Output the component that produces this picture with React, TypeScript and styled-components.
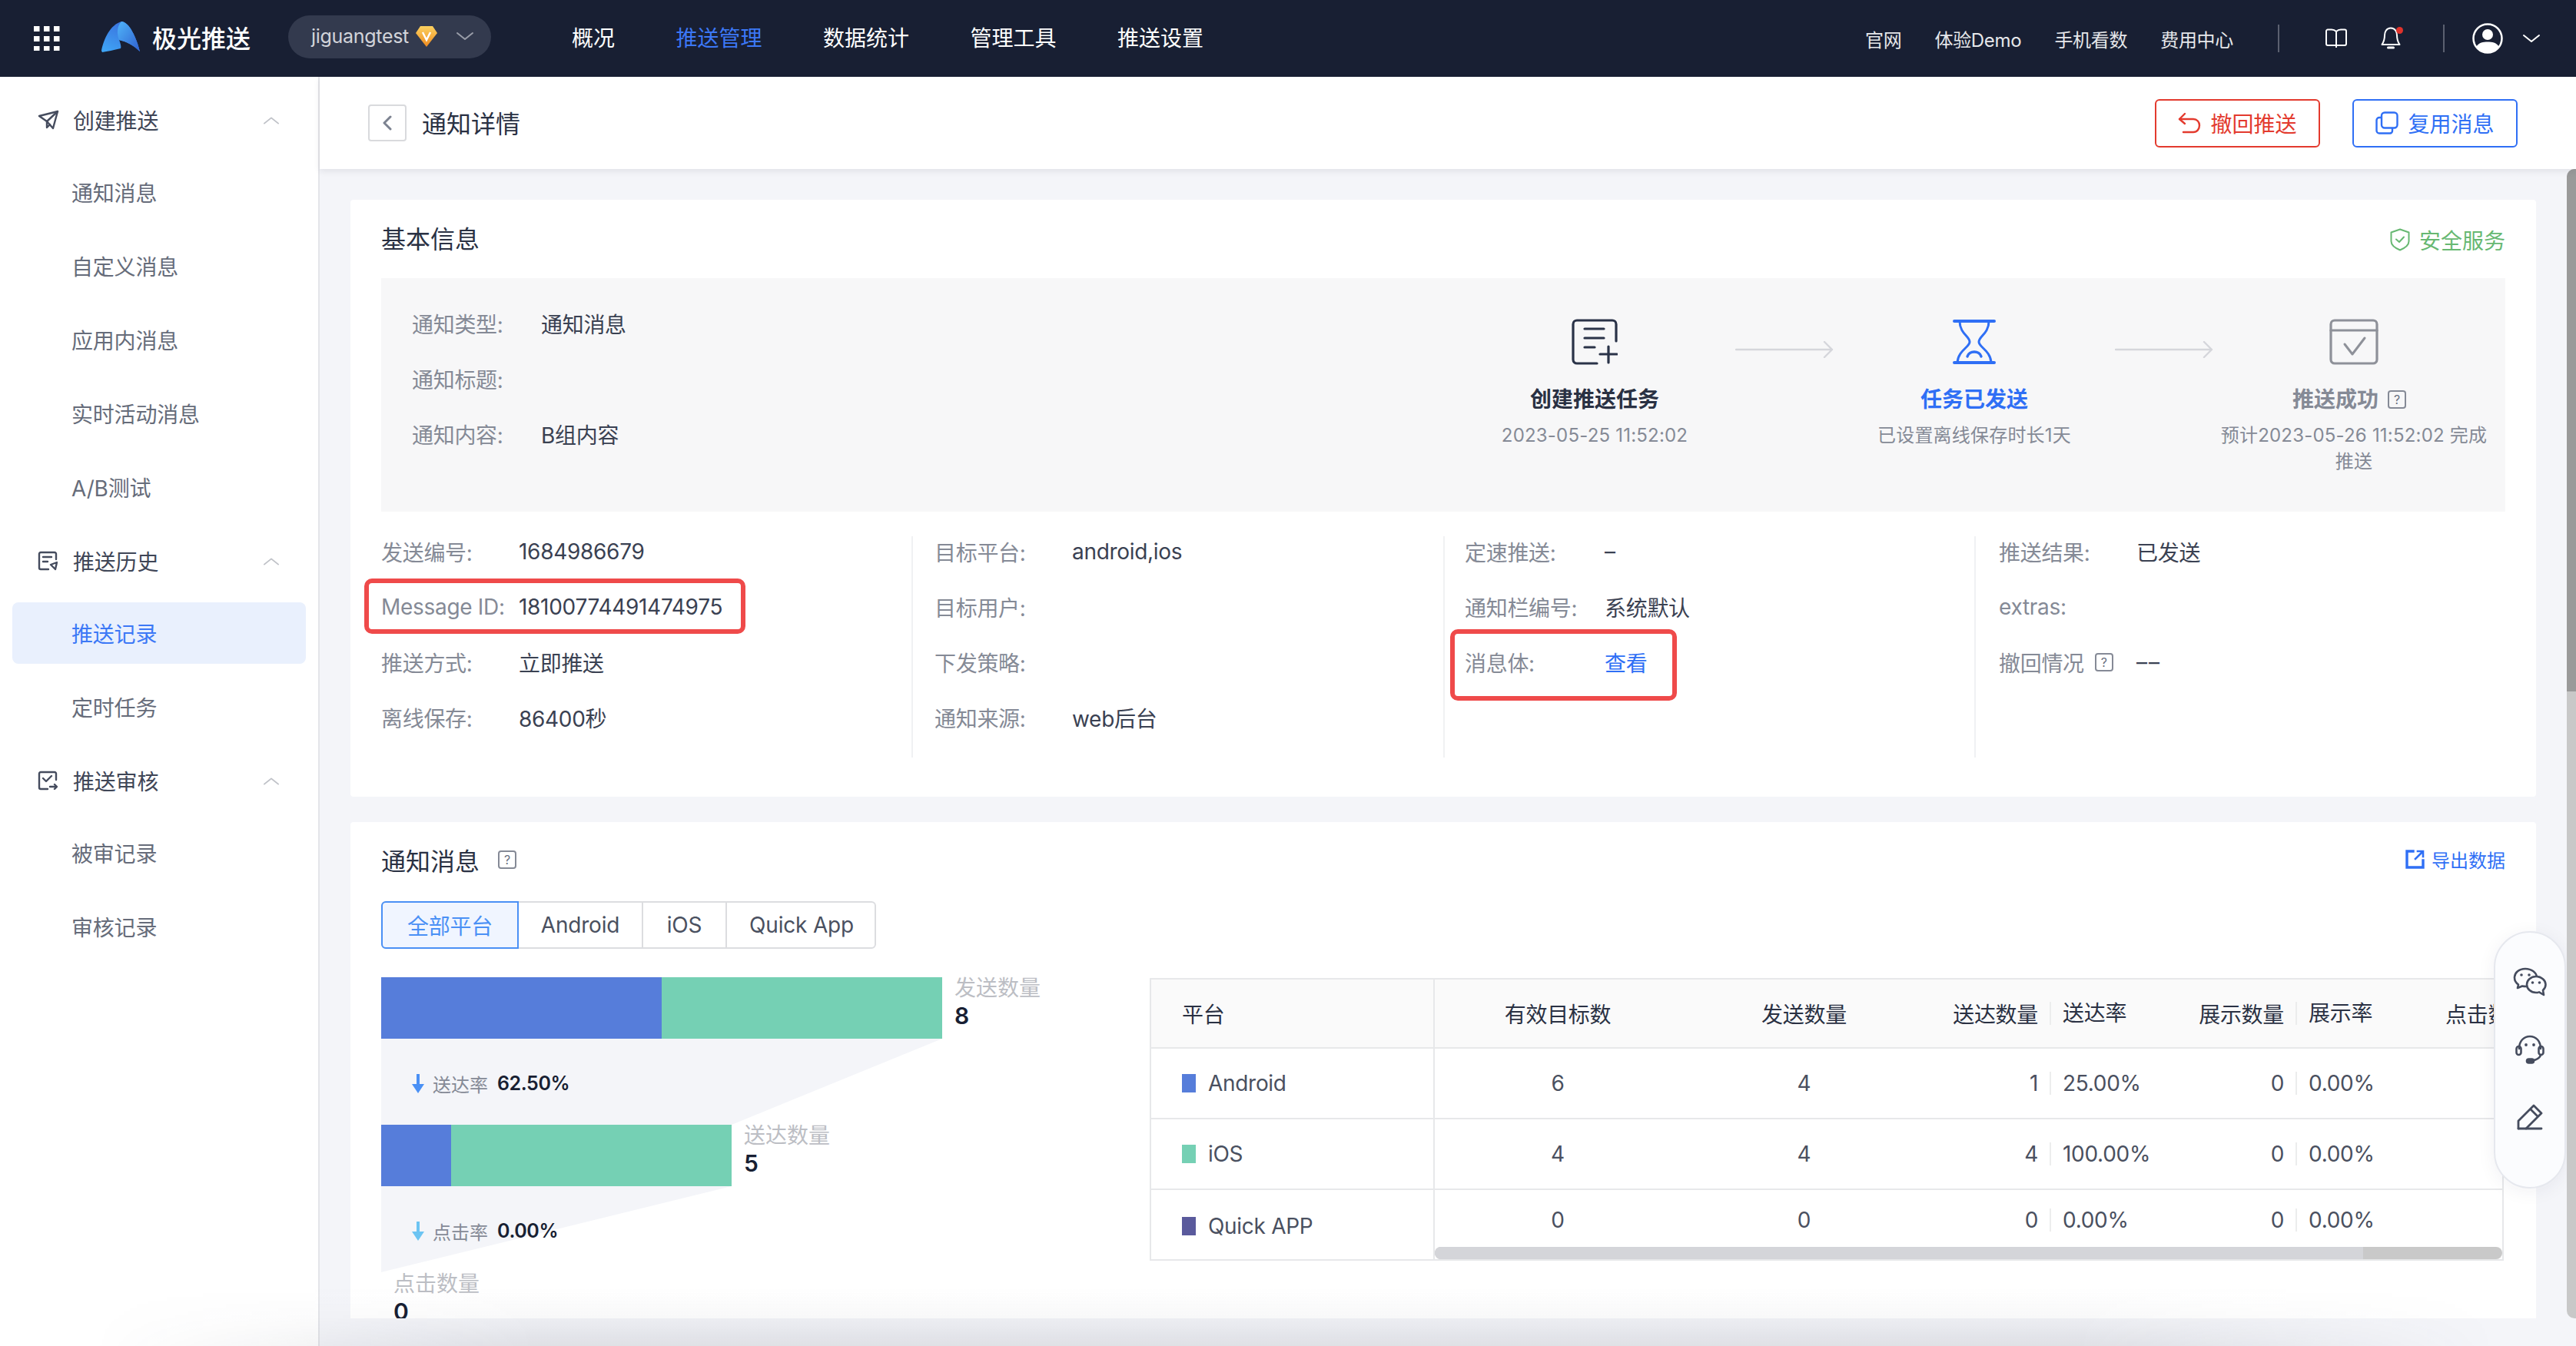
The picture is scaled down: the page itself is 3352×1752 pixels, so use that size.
import React from "react";
import styled, { createGlobalStyle } from "styled-components";

const Global = createGlobalStyle`
  html, body { margin: 0; padding: 0; width: 3352px; height: 1752px; overflow: hidden; background: #f4f5f9; }
  * { box-sizing: border-box; }
  body { font-family: Inter, "Noto Sans CJK SC", sans-serif; font-size: 28px; }
`;

const Page = styled.div`
  position: relative;
  width: 3352px;
  height: 1752px;
  overflow: hidden;
  display: flex;
  flex-direction: column;
  background: #f4f5f9;
`;

/* ---------- top bar ---------- */
const TopBar = styled.header`
  flex: none;
  height: 100px;
  background: #181f33;
  display: flex;
  align-items: center;
  padding: 0 47px 0 44px;
  color: #fff;
`;
const Brand = styled.div`
  display: flex;
  align-items: center;
  margin-left: 54px;
  gap: 16px;
  font-size: 32px;
  font-weight: 500;
  margin-top: -4px;
`;
const Tenant = styled.div`
  width: 264px;
  height: 56px;
  margin: -4px 0 0 49px;
  border-radius: 28px;
  background: #333a4e;
  display: flex;
  align-items: center;
  padding: 0 0 2px 30px;
  color: #d2d4da;
  font-size: 25px;
  letter-spacing: -0.3px;
  gap: 8px;
`;
const TenantChevron = styled.span`
  margin-left: 16px;
  display: flex;
`;
const Nav = styled.nav`
  display: flex;
  gap: 79.5px;
  margin-left: 105px;
`;
const NavItem = styled.a<{ $active?: boolean }>`
  font-size: 28px;
  line-height: 40px;
  color: ${(p) => (p.$active ? "#3c78f6" : "#fff")};
`;
const TopRight = styled.div`
  margin-left: auto;
  display: flex;
  align-items: center;
`;
const TopLinks = styled.div`
  display: flex;
  gap: 43px;
  font-size: 24px;
  letter-spacing: -0.3px;
  color: #e6e7ea;
`;
const TopDivider = styled.span<{ $ml: number; $mr: number }>`
  width: 2px;
  height: 36px;
  margin: 0 ${(p) => p.$mr}px 0 ${(p) => p.$ml}px;
  background: #5b6070;
`;
const BellWrap = styled.span`
  position: relative;
  display: flex;
  margin-left: 44px;
`;
const RedDot = styled.span`
  position: absolute;
  top: 0;
  right: -3px;
  width: 9px;
  height: 9px;
  border-radius: 50%;
  background: #e0322b;
`;

/* ---------- body ---------- */
const Body = styled.div`
  flex: 1;
  display: flex;
  min-height: 0;
`;
const Sidebar = styled.aside`
  flex: none;
  width: 416px;
  background: #fff;
  border-right: 2px solid #e4e5e9;
  padding: 16px 16px 0;
`;
const GroupHead = styled.div`
  height: 80px;
  margin-bottom: 14px;
  display: flex;
  align-items: center;
  padding-left: 33px;
  color: #3f4657;
  font-size: 28px;
  letter-spacing: -0.2px;
`;
const GroupIcon = styled.span`
  width: 46px;
  display: flex;
  align-items: center;
`;
const GroupChevron = styled.span`
  margin-left: auto;
  margin-right: 35px;
  margin-top: 2px;
  display: flex;
`;
const SideItem = styled.div<{ $active?: boolean }>`
  height: 80px;
  margin-bottom: 16px;
  padding-left: 77px;
  display: flex;
  align-items: center;
  border-radius: 8px;
  font-size: 28px;
  letter-spacing: -0.2px;
  color: ${(p) => (p.$active ? "#3c78f6" : "#666c7a")};
  background: ${(p) => (p.$active ? "#e9f0fd" : "transparent")};
`;

const Main = styled.main`
  flex: 1;
  min-width: 0;
  display: flex;
  flex-direction: column;
`;
const PageHeader = styled.div`
  position: relative;
  z-index: 2;
  flex: none;
  height: 120px;
  background: #fff;
  box-shadow: 0 3px 8px rgba(30, 35, 60, 0.09);
  display: flex;
  align-items: center;
  padding: 0 76px 0 63px;
`;
const BackButton = styled.span`
  width: 50px;
  height: 48px;
  border: 2px solid #d9dadd;
  border-radius: 4px;
  display: flex;
  align-items: center;
  justify-content: center;
`;
const PageTitle = styled.h1`
  margin: -3px 0 0 20px;
  font-size: 32px;
  font-weight: 400;
  color: #2a3143;
`;
const Actions = styled.div`
  margin-left: auto;
  display: flex;
  gap: 42px;
`;
const ActionButton = styled.button<{ $color: string }>`
  width: 215px;
  height: 63px;
  background: #fff;
  border: 2.5px solid ${(p) => p.$color};
  border-radius: 6px;
  color: ${(p) => p.$color};
  font: inherit;
  font-size: 28px;
  display: flex;
  align-items: center;
  justify-content: center;
  gap: 12px;
  padding: 0;
`;

const Content = styled.div`
  flex: none;
  height: 1496px;
  overflow: hidden;
  padding: 40px 52px 0 40px;
`;
const Card = styled.section<{ $h: number; $mt?: number }>`
  height: ${(p) => p.$h}px;
  margin-top: ${(p) => p.$mt ?? 0}px;
  background: #fff;
  border-radius: 4px;
  padding: 30px 40px 0;
`;
const CardHead = styled.div`
  height: 40px;
  display: flex;
  align-items: center;
  justify-content: space-between;
`;
const CardTitle = styled.h2`
  margin: -2px 0 0;
  font-size: 32px;
  font-weight: 400;
  color: #2a3143;
  display: flex;
  align-items: center;
  gap: 24px;
`;
const Safe = styled.span`
  display: flex;
  align-items: center;
  gap: 12px;
  color: #67b872;
  font-size: 28px;
  margin-top: 4px;
`;
const Help = styled.span<{ $size?: number }>`
  display: inline-flex;
  align-items: center;
  justify-content: center;
  width: ${(p) => p.$size ?? 24}px;
  height: ${(p) => p.$size ?? 24}px;
  border: 2px solid #858a96;
  border-radius: 4px;
  color: #6a7080;
  font-size: 16px;
  font-weight: 400;
  line-height: 1;
`;

const SummaryPanel = styled.div`
  margin-top: 32px;
  height: 304px;
  background: #f7f7f8;
  display: flex;
  justify-content: space-between;
  padding: 41px 17px 0 40px;
`;
const SummaryList = styled.div`
  display: flex;
  flex-direction: column;
  gap: 36px;
`;
const Row = styled.div<{ $h?: number }>`
  height: ${(p) => p.$h ?? 36}px;
  display: flex;
  align-items: center;
  font-size: 28px;
  letter-spacing: -0.3px;
  white-space: nowrap;
`;
const Label = styled.span<{ $w: number }>`
  flex: none;
  width: ${(p) => p.$w}px;
  color: #858a96;
  display: flex;
  align-items: center;
  gap: 14px;
`;
const Value = styled.span<{ $link?: boolean }>`
  color: ${(p) => (p.$link ? "#2f6ff5" : "#3a4152")};
`;
const DashValue = styled(Value)`
  letter-spacing: 2px;
`;

const Steps = styled.div`
  display: flex;
  align-items: flex-start;
  margin-top: 12px;
`;
const Step = styled.div`
  width: 360px;
  display: flex;
  flex-direction: column;
  align-items: center;
  text-align: center;
`;
const StepTitle = styled.div<{ $color: string; $pr?: number }>`
  margin-top: 25px;
  height: 40px;
  padding-right: ${(p) => p.$pr ?? 0}px;
  line-height: 40px;
  font-size: 28px;
  font-weight: 700;
  color: ${(p) => p.$color};
  display: flex;
  align-items: center;
  gap: 12px;
`;
const StepSub = styled.div`
  margin-top: 10px;
  font-size: 24px;
  line-height: 34px;
  color: #858a96;
  letter-spacing: 0.2px;
`;
const StepArrow = styled.span`
  flex: none;
  width: 134px;
  display: flex;
  justify-content: center;
  margin-top: 29px;
`;

const InfoGrid = styled.div`
  position: relative;
  margin-top: 32px;
  display: grid;
  grid-template-columns: 690px 692px 691px 691px;
  height: 288px;
`;
const InfoCol = styled.div<{ $pl?: number }>`
  display: flex;
  flex-direction: column;
  gap: 32px;
  padding-left: ${(p) => p.$pl ?? 0}px;
  border-left: ${(p) => (p.$pl ? "2px solid #f0f1f3" : "none")};
`;
const Annotation = styled.span<{ $x: number; $y: number; $w: number; $h: number }>`
  position: absolute;
  left: ${(p) => p.$x}px;
  top: ${(p) => p.$y}px;
  width: ${(p) => p.$w}px;
  height: ${(p) => p.$h}px;
  border: 6px solid #ef4a4a;
  border-radius: 10px;
  pointer-events: none;
`;

const ExportLink = styled.span`
  display: flex;
  align-items: center;
  gap: 8px;
  color: #2f6ff5;
  font-size: 24px;
  margin-top: -4px;
`;
const Tabs = styled.div`
  margin-top: 33px;
  width: 644px;
  height: 62px;
  display: flex;
  border: 2px solid #dcdde0;
  border-radius: 6px;
  font-size: 28px;
  color: #4a5060;
`;
const Tab = styled.span<{ $w: number; $active?: boolean }>`
  flex: none;
  width: ${(p) => p.$w}px;
  margin: ${(p) => (p.$active ? "-2px 0 -2px -2px" : "0")};
  display: flex;
  align-items: center;
  justify-content: center;
  border-right: 2px solid #dcdde0;
  letter-spacing: -0.2px;
  ${(p) =>
    p.$active
      ? "border: 2px solid #4a90f5; border-radius: 6px 0 0 6px; background: #f0f5ff; color: #4a90f5;"
      : ""}
  &:last-child { border-right: none; }
`;
const DataRow = styled.div`
  margin-top: 37px;
  display: flex;
  align-items: flex-start;
`;
const Chart = styled.div`
  position: relative;
  flex: none;
  width: 1000px;
  height: 460px;
`;
const ChartSvg = styled.svg`
  display: block;
`;
const ChartLabel = styled.div<{ $x: number; $y: number }>`
  position: absolute;
  left: ${(p) => p.$x}px;
  top: ${(p) => p.$y}px;
  font-size: 28px;
  line-height: 36px;
  color: #bcbec4;
  white-space: nowrap;
`;
const ChartNum = styled.div`
  font-size: 30px;
  line-height: 36px;
  font-weight: 600;
  color: #181f33;
`;
const Rate = styled.div<{ $x: number; $y: number }>`
  position: absolute;
  left: ${(p) => p.$x}px;
  top: ${(p) => p.$y}px;
  display: flex;
  align-items: center;
  height: 36px;
  font-size: 24px;
  color: #858a96;
  white-space: nowrap;
`;
const RateValue = styled.span`
  margin-left: 12px;
  font-size: 25px;
  font-weight: 600;
  color: #181f33;
  letter-spacing: -0.4px;
`;
const RateArrow = styled.span`
  width: 27px;
  display: flex;
`;

const Table = styled.div`
  flex: none;
  width: 1762px;
  height: 368px;
  margin-top: 1px;
  display: flex;
  border: 2px solid #e7e8ea;
  font-size: 28px;
  letter-spacing: -0.3px;
  color: #4a5060;
`;
const FixedCol = styled.div`
  flex: none;
  width: 369px;
  border-right: 2px solid #e7e8ea;
`;
const FixedCell = styled.div<{ $head?: boolean; $last?: boolean }>`
  height: ${(p) => (p.$last || p.$head ? 90 : 92)}px;
  padding: ${(p) => (p.$last ? "3px" : "0")} 0 0 40px;
  display: flex;
  align-items: center;
  gap: 16px;
  background: ${(p) => (p.$head ? "#fafafa" : "#fff")};
  color: ${(p) => (p.$head ? "#2a3143" : "#4a5060")};
  border-bottom: ${(p) => (p.$last ? "none" : "2px solid #e7e8ea")};
`;
const Swatch = styled.span<{ $c: string }>`
  width: 18px;
  height: 24px;
  background: ${(p) => p.$c};
`;
const ScrollCol = styled.div`
  flex: 1;
  min-width: 0;
  overflow: hidden;
  display: flex;
  flex-direction: column;
`;
const GridRow = styled.div<{ $head?: boolean; $last?: boolean }>`
  flex: none;
  display: grid;
  grid-template-columns: 320px 321px 159px 162px 158px 162px 200px;
  align-items: center;
  height: ${(p) => (p.$head ? 90 : p.$last ? 74 : 92)}px;
  padding-top: ${(p) => (p.$last ? 3 : 0)}px;
  background: ${(p) => (p.$head ? "#fafafa" : "#fff")};
  color: ${(p) => (p.$head ? "#2a3143" : "#4a5060")};
  border-bottom: ${(p) => (p.$last ? "none" : "2px solid #e7e8ea")};
`;
const Cell = styled.span<{ $align: "center" | "right" | "left" | "first" }>`
  white-space: nowrap;
  text-align: ${(p) => (p.$align === "first" ? "left" : p.$align)};
  padding: ${(p) =>
    p.$align === "right" ? "0 15px 0 0" : p.$align === "left" ? "0 0 0 15px" : p.$align === "first" ? "0 0 0 33px" : "0"};
  ${(p) => (p.$align === "left" ? "border-left: 2px solid #eceded; line-height: 30px;" : "")}
`;
const ScrollTrack = styled.div`
  flex: none;
  height: 16px;
  margin-top: auto;
  border-radius: 8px;
  background: #c9c9c9;
  overflow: hidden;
`;
const ScrollThumb = styled.div<{ $w: number }>`
  width: ${(p) => p.$w}px;
  height: 16px;
  background: #d4d5d9;
`;

const FloatPanel = styled.div`
  position: absolute;
  left: 3245px;
  top: 1212px;
  width: 94px;
  height: 335px;
  border: 2px solid #e6e8ee;
  border-radius: 47px;
  background: #fbfcfe;
  box-shadow: 0 4px 24px rgba(30, 40, 70, 0.06);
  display: flex;
  flex-direction: column;
  align-items: center;
  gap: 48px;
  padding-top: 44px;
`;
const FloatIcon = styled.span`
  height: 40px;
  display: flex;
  align-items: center;
  justify-content: center;
`;
const PageScrollTrack = styled.div`
  position: absolute;
  z-index: 1;
  left: 3340px;
  top: 220px;
  width: 12px;
  height: 1496px;
  background: #c8c8c8;
  border-radius: 10px 0 0 10px;
  overflow: hidden;
`;
const PageScrollThumb = styled.div`
  height: 680px;
  background: #9a9a9a;
`;
const BottomShade = styled.div`
  position: absolute;
  z-index: 3;
  left: 0;
  right: 0;
  bottom: 0;
  height: 76px;
  pointer-events: none;
  background: linear-gradient(to bottom, rgba(40, 44, 60, 0) 0, rgba(40, 44, 60, 0.03) 50%, rgba(40, 44, 60, 0.1) 100%);
  mask-image: linear-gradient(to right, transparent 120px, #000 700px, #000 2700px, transparent 3250px);
`;

/* ---------- icons ---------- */
const Chevron = ({ up, color, w = 22 }: { up?: boolean; color: string; w?: number }) => (
  <svg width={w} height={12} viewBox="0 0 22 12" fill="none" stroke={color} strokeWidth={2} strokeLinecap="round" strokeLinejoin="round">
    <polyline points={up ? "1,10 11,2 21,10" : "1,2 11,10 21,2"} />
  </svg>
);

const GridIcon = () => (
  <svg width="34" height="32" viewBox="0 0 34 32" fill="#fff">
    {[0, 13, 26].flatMap((y) => [0, 13, 26].map((x) => <rect key={`${x}-${y}`} x={x} y={y} width="7.5" height="7" />))}
  </svg>
);

const Logo = () => (
  <svg width="50" height="40" viewBox="0 0 50 40">
    <defs>
      <linearGradient id="lg" x1="0" y1="1" x2="0.6" y2="0">
        <stop offset="0" stopColor="#3fa8f7" />
        <stop offset="1" stopColor="#3a6fdc" />
      </linearGradient>
      <linearGradient id="lg2" x1="0" y1="0" x2="1" y2="1">
        <stop offset="0" stopColor="#4fb4f8" />
        <stop offset="1" stopColor="#2f5fd0" />
      </linearGradient>
    </defs>
    <path d="M0 38 C3 22 12 4 26 0 C36 0 46 22 50 39 C42 31 32 26 23 24 C25 29 26 33 25 35 C16 37 8 39 1 40 Z" fill="url(#lg)" />
    <path d="M26 0 C36 0 46 22 50 39 C42 31 32 26 23 24 C20 16 20 6 26 0 Z" fill="url(#lg2)" />
  </svg>
);

const Diamond = () => (
  <svg width="30" height="29" viewBox="0 0 30 29">
    <defs>
      <linearGradient id="dm" x1="0" y1="0" x2="0" y2="1">
        <stop offset="0" stopColor="#fbd160" />
        <stop offset="1" stopColor="#ef8a1f" />
      </linearGradient>
    </defs>
    <polygon points="7,1 23,1 29,10 15,28 1,10" fill="url(#dm)" />
    <polyline points="10,9 15,19 20,9" fill="none" stroke="#fff" strokeWidth="2.4" />
  </svg>
);

const BookIcon = () => (
  <svg width="28" height="26" viewBox="0 0 28 26" fill="none" stroke="#fff" strokeWidth="2">
    <path d="M14 4 C12 2 10 1.5 8 1.5 H3 a2 2 0 0 0 -2 2 V20 a2 2 0 0 0 2 2 H25 a2 2 0 0 0 2 -2 V3.5 a2 2 0 0 0 -2 -2 H20 C18 1.5 16 2 14 4 Z M14 4 V25" />
  </svg>
);

const BellIcon = () => (
  <svg width="26" height="30" viewBox="0 0 26 30" fill="none" stroke="#fff" strokeWidth="2" strokeLinecap="round" strokeLinejoin="round">
    <path d="M13 1.5 C7 1.5 5 7 5 11 C5 17 3.5 20 1.5 23 H24.5 C22.5 20 21 17 21 11 C21 7 19 1.5 13 1.5 Z" />
    <path d="M9.5 27 H16.5" strokeWidth="3" />
  </svg>
);

const AvatarSvg = styled.svg`
  margin-right: 26px;
`;
const Avatar = () => (
  <AvatarSvg width="40" height="40" viewBox="0 0 40 40">
    <circle cx="20" cy="20" r="18.5" fill="#181f33" stroke="#fff" strokeWidth="2.5" />
    <circle cx="20" cy="15" r="7" fill="#fff" />
    <path d="M5 31 C9 25 14 24.5 20 24.5 C26 24.5 31 25 35 31 C31 36 26 38.5 20 38.5 C14 38.5 9 36 5 31 Z" fill="#fff" />
  </AvatarSvg>
);

const PlaneIcon = () => (
  <svg width="28" height="26" viewBox="0 0 28 26" fill="none" stroke="#454c5e" strokeWidth="2.4" strokeLinejoin="round" strokeLinecap="round">
    <path d="M2 8 L26 2 L20 24 L12 15 Z" />
    <path d="M26 2 L12 15 L12 23 L16 19" />
  </svg>
);
const HistoryIcon = () => (
  <svg width="26" height="26" viewBox="0 0 26 26" fill="none" stroke="#454c5e" strokeWidth="2.4" strokeLinejoin="round" strokeLinecap="round">
    <path d="M24 11 V4 a2 2 0 0 0 -2 -2 H4 a2 2 0 0 0 -2 2 V22 a2 2 0 0 0 2 2 H14" />
    <path d="M7 8 H18 M7 14 H13" />
    <path d="M17 18 L25 15 L23 24 L20 21 Z" />
  </svg>
);
const AuditIcon = () => (
  <svg width="26" height="26" viewBox="0 0 26 26" fill="none" stroke="#454c5e" strokeWidth="2.4" strokeLinejoin="round" strokeLinecap="round">
    <path d="M24 12 V4 a2 2 0 0 0 -2 -2 H4 a2 2 0 0 0 -2 2 V22 a2 2 0 0 0 2 2 H13" />
    <path d="M7 10 L11 14 L18 7" />
    <path d="M16 21 H25 M22 18 L25 21 L22 24" />
  </svg>
);

const BackChevron = () => (
  <svg width="14" height="20" viewBox="0 0 14 20" fill="none" stroke="#7c8290" strokeWidth="3" strokeLinecap="round" strokeLinejoin="round">
    <polyline points="11,2 3,10 11,18" />
  </svg>
);
const UndoIcon = () => (
  <svg width="30" height="28" viewBox="0 0 30 28" fill="none" stroke="#e33a2e" strokeWidth="2.4" strokeLinecap="round" strokeLinejoin="round">
    <path d="M9 2 L2 9 L9 15" />
    <path d="M2 9 H20 C25 9 28 13 28 17 C28 22 25 26 20 26 H7" />
  </svg>
);
const CopyIcon = () => (
  <svg width="30" height="30" viewBox="0 0 30 30" fill="none" stroke="#2f6ff5" strokeWidth="2.4" strokeLinejoin="round">
    <rect x="8" y="1.5" width="20.5" height="20" rx="4" />
    <path d="M8 8 H5 a3.5 3.5 0 0 0 -3.5 3.5 V25 a3.5 3.5 0 0 0 3.5 3.5 H19 a3 3 0 0 0 3 -3 V22" />
  </svg>
);
const ShieldIcon = () => (
  <svg width="26" height="30" viewBox="0 0 26 30" fill="none" stroke="#67b872" strokeWidth="2" strokeLinecap="round" strokeLinejoin="round">
    <path d="M13 1.5 L24.5 5.5 V17 C24.5 22 19 26 13 28.5 C7 26 1.5 22 1.5 17 V5.5 Z" />
    <path d="M8 14.5 L12 18 L18 11.5" />
  </svg>
);
const DocPlus = () => (
  <svg width="60" height="60" viewBox="0 0 60 60" fill="none" stroke="#2a3348" strokeWidth="3.2" strokeLinecap="round" strokeLinejoin="round">
    <path d="M33 58 H7 a5 5 0 0 1 -5 -5 V7 a5 5 0 0 1 5 -5 H53 a5 5 0 0 1 5 5 V29" />
    <path d="M17 13 H42 M17 25 H42 M17 37 H30" />
    <path d="M37 46 H59 M48 36 V57" />
  </svg>
);
const Hourglass = () => (
  <svg width="60" height="60" viewBox="0 0 60 60" fill="none" stroke="#2f6ff5" strokeWidth="3" strokeLinecap="round" strokeLinejoin="round">
    <path d="M4 3 H56 M4 57 H56" strokeWidth="4" />
    <path d="M11 3 C11 19 24 23 24 30 C24 37 9 41 8 57" />
    <path d="M49 3 C49 19 36 23 36 30 C36 37 51 41 52 57" />
    <path d="M21 49 C23 41 37 41 39 49" strokeWidth="3.4" />
  </svg>
);
const CheckCard = () => (
  <svg width="64" height="60" viewBox="0 0 64 60" fill="none" stroke="#8e9199" strokeWidth="3.2" strokeLinecap="round" strokeLinejoin="round">
    <rect x="2" y="2" width="60" height="56" rx="5" />
    <path d="M2 15 H62" />
    <path d="M20 33 L30 46 L46 25" strokeWidth="3" />
  </svg>
);
const LongArrow = () => (
  <svg width="128" height="22" viewBox="0 0 128 22" fill="none" stroke="#d5d6db" strokeWidth="2.4" strokeLinecap="round" strokeLinejoin="round">
    <path d="M1 11 H126 M116 1 L126 11 L116 21" />
  </svg>
);
const ExportIcon = () => (
  <svg width="26" height="26" viewBox="0 0 26 26" fill="none" stroke="#2f6ff5" strokeWidth="3.4" strokeLinecap="square">
    <path d="M10 3 H2 V24 H23 V15" />
    <path d="M13 13 L22 4 M16 3 H23 V10" strokeWidth="2.6" />
  </svg>
);
const DownArrow = ({ color }: { color: string }) => (
  <svg width="16" height="28" viewBox="0 0 16 28" fill={color}>
    <rect x="6" y="2" width="4" height="16" />
    <polygon points="0,15 16,15 8,27" />
  </svg>
);
const WechatIcon = () => (
  <svg width="44" height="38" viewBox="0 0 44 38" stroke="#454c5e" strokeWidth="2.6" strokeLinejoin="round" fill="#fbfcfe">
    <path d="M16 2 C8 2 2 7 2 13.5 C2 17.5 4 20.5 7 22.5 L6 27 L12 24.5 C14 25 16 25 18 25 C26 25 31 20 31 13.5 C31 7 24 2 16 2 Z" />
    <path d="M30 12 C23 12 18 17 18 22.5 C18 28 23 33 30 33 C31.5 33 33 32.8 34 32.4 L40 36 L39 30 C41 28 42.5 25.5 42.5 22.5 C42.5 17 37 12 30 12 Z" />
    <g fill="#454c5e" stroke="none">
      <circle cx="11" cy="10" r="1.8" /><circle cx="21" cy="10" r="1.8" />
      <circle cx="25.5" cy="20" r="1.8" /><circle cx="34.5" cy="20" r="1.8" />
    </g>
  </svg>
);
const HeadsetIcon = () => (
  <svg width="38" height="38" viewBox="0 0 38 38" fill="none" stroke="#454c5e" strokeWidth="2.6" strokeLinecap="round" strokeLinejoin="round">
    <path d="M5 18 C5 8 11 2 19 2 C27 2 33 8 33 18" />
    <rect x="1.5" y="15" width="6" height="11" rx="3" />
    <rect x="30.5" y="15" width="6" height="11" rx="3" />
    <path d="M33 26 C32 31 26 33 20 34" />
    <rect x="15" y="31.5" width="9" height="5" rx="2.5" fill="#454c5e" />
    <g fill="#454c5e" stroke="none">
      <circle cx="14" cy="13" r="1.9" /><circle cx="24" cy="13" r="1.9" />
    </g>
  </svg>
);
const PenIcon = () => (
  <svg width="34" height="34" viewBox="0 0 34 34" fill="none" stroke="#454c5e" strokeWidth="2.8" strokeLinecap="round" strokeLinejoin="round">
    <path d="M2 32 H32" />
    <path d="M2 32 V22 L22 2 L32 12 L12 32" />
    <path d="M18 7 L27 16" />
  </svg>
);

const sideData: { icon: React.ReactNode; title: string; items: string[] }[] = [
  { icon: <PlaneIcon />, title: "创建推送", items: ["通知消息", "自定义消息", "应用内消息", "实时活动消息", "A/B测试"] },
  { icon: <HistoryIcon />, title: "推送历史", items: ["推送记录", "定时任务"] },
  { icon: <AuditIcon />, title: "推送审核", items: ["被审记录", "审核记录"] },
];

type RowData = [string, string, string, string, string, string, string];
const tableRows: RowData[] = [
  ["6", "4", "1", "25.00%", "0", "0.00%", ""],
  ["4", "4", "4", "100.00%", "0", "0.00%", ""],
  ["0", "0", "0", "0.00%", "0", "0.00%", ""],
];
const aligns = ["center", "center", "right", "left", "right", "left", "first"] as const;
const tableHead: RowData = ["有效目标数", "发送数量", "送达数量", "送达率", "展示数量", "展示率", "点击数量"];

export default function App() {
  return (
    <Page>
      <Global />
      <TopBar>
        <GridIcon />
        <Brand>
          <Logo />
          极光推送
        </Brand>
        <Tenant>
          jiguangtest
          <Diamond />
          <TenantChevron>
            <Chevron color="#9a9ea9" />
          </TenantChevron>
        </Tenant>
        <Nav>
          <NavItem>概况</NavItem>
          <NavItem $active>推送管理</NavItem>
          <NavItem>数据统计</NavItem>
          <NavItem>管理工具</NavItem>
          <NavItem>推送设置</NavItem>
        </Nav>
        <TopRight>
          <TopLinks>
            <span>官网</span>
            <span>体验Demo</span>
            <span>手机看数</span>
            <span>费用中心</span>
          </TopLinks>
          <TopDivider $ml={58} $mr={60} />
          <BookIcon />
          <BellWrap>
            <BellIcon />
            <RedDot />
          </BellWrap>
          <TopDivider $ml={55} $mr={36} />
          <Avatar />
          <Chevron color="#fff" />
        </TopRight>
      </TopBar>
      <Body>
        <Sidebar>
          {sideData.map((g) => (
            <div key={g.title}>
              <GroupHead>
                <GroupIcon>{g.icon}</GroupIcon>
                {g.title}
                <GroupChevron>
                  <Chevron up color="#bfc1c7" w={20} />
                </GroupChevron>
              </GroupHead>
              {g.items.map((it) => (
                <SideItem key={it} $active={it === "推送记录"}>
                  {it}
                </SideItem>
              ))}
            </div>
          ))}
        </Sidebar>
        <Main>
          <PageHeader>
            <BackButton>
              <BackChevron />
            </BackButton>
            <PageTitle>通知详情</PageTitle>
            <Actions>
              <ActionButton $color="#e33a2e">
                <UndoIcon />
                撤回推送
              </ActionButton>
              <ActionButton $color="#2f6ff5">
                <CopyIcon />
                复用消息
              </ActionButton>
            </Actions>
          </PageHeader>
          <Content>
            <Card $h={777}>
              <CardHead>
                <CardTitle>基本信息</CardTitle>
                <Safe>
                  <ShieldIcon />
                  安全服务
                </Safe>
              </CardHead>
              <SummaryPanel>
                <SummaryList>
                  <Row><Label $w={168}>通知类型:</Label><Value>通知消息</Value></Row>
                  <Row><Label $w={168}>通知标题:</Label></Row>
                  <Row><Label $w={168}>通知内容:</Label><Value>B组内容</Value></Row>
                </SummaryList>
                <Steps>
                  <Step>
                    <DocPlus />
                    <StepTitle $color="#2a3143">创建推送任务</StepTitle>
                    <StepSub>2023-05-25 11:52:02</StepSub>
                  </Step>
                  <StepArrow><LongArrow /></StepArrow>
                  <Step>
                    <Hourglass />
                    <StepTitle $color="#2f6ff5">任务已发送</StepTitle>
                    <StepSub>已设置离线保存时长1天</StepSub>
                  </Step>
                  <StepArrow><LongArrow /></StepArrow>
                  <Step>
                    <CheckCard />
                    <StepTitle $color="#858a96" $pr={12}>推送成功 <Help>?</Help></StepTitle>
                    <StepSub>预计2023-05-26 11:52:02 完成推送</StepSub>
                  </Step>
                </Steps>
              </SummaryPanel>
              <InfoGrid>
                <InfoCol>
                  <Row $h={40}><Label $w={179}>发送编号:</Label><Value>1684986679</Value></Row>
                  <Row $h={40}><Label $w={179}>Message ID:</Label><Value>18100774491474975</Value></Row>
                  <Row $h={40}><Label $w={179}>推送方式:</Label><Value>立即推送</Value></Row>
                  <Row $h={40}><Label $w={179}>离线保存:</Label><Value>86400秒</Value></Row>
                </InfoCol>
                <InfoCol $pl={28}>
                  <Row $h={40}><Label $w={179}>目标平台:</Label><Value>android,ios</Value></Row>
                  <Row $h={40}><Label $w={179}>目标用户:</Label></Row>
                  <Row $h={40}><Label $w={179}>下发策略:</Label></Row>
                  <Row $h={40}><Label $w={179}>通知来源:</Label><Value>web后台</Value></Row>
                </InfoCol>
                <InfoCol $pl={26}>
                  <Row $h={40}><Label $w={182}>定速推送:</Label><Value>–</Value></Row>
                  <Row $h={40}><Label $w={182}>通知栏编号:</Label><Value>系统默认</Value></Row>
                  <Row $h={40}><Label $w={182}>消息体:</Label><Value $link>查看</Value></Row>
                </InfoCol>
                <InfoCol $pl={30}>
                  <Row $h={40}><Label $w={179}>推送结果:</Label><Value>已发送</Value></Row>
                  <Row $h={40}><Label $w={179}>extras:</Label></Row>
                  <Row $h={40}><Label $w={179}>撤回情况 <Help>?</Help></Label><DashValue>––</DashValue></Row>
                </InfoCol>
                <Annotation $x={-22} $y={55} $w={496} $h={72} />
                <Annotation $x={1391} $y={121} $w={295} $h={93} />
              </InfoGrid>
            </Card>
            <Card $h={700} $mt={33}>
              <CardHead>
                <CardTitle>
                  通知消息
                  <Help>?</Help>
                </CardTitle>
                <ExportLink>
                  <ExportIcon />
                  导出数据
                </ExportLink>
              </CardHead>
              <Tabs>
                <Tab $w={179} $active>全部平台</Tab>
                <Tab $w={162}>Android</Tab>
                <Tab $w={109}>iOS</Tab>
                <Tab $w={194}>Quick App</Tab>
              </Tabs>
              <DataRow>
                <Chart>
                  <ChartSvg width="1000" height="460" viewBox="0 0 1000 460">
                    <polygon points="0,80 730,80 456,192 0,192" fill="#f4f5f9" />
                    <polygon points="0,272 456,272 0,384" fill="#f4f5f9" />
                    <rect x="0" y="0" width="365" height="80" fill="#567dda" />
                    <rect x="365" y="0" width="365" height="80" fill="#75d0b4" />
                    <rect x="0" y="192" width="91" height="80" fill="#567dda" />
                    <rect x="91" y="192" width="365" height="80" fill="#75d0b4" />
                  </ChartSvg>
                  <ChartLabel $x={746} $y={-4}>
                    发送数量
                    <ChartNum>8</ChartNum>
                  </ChartLabel>
                  <ChartLabel $x={472} $y={188}>
                    送达数量
                    <ChartNum>5</ChartNum>
                  </ChartLabel>
                  <ChartLabel $x={16} $y={381}>
                    点击数量
                    <ChartNum>0</ChartNum>
                  </ChartLabel>
                  <Rate $x={40} $y={120}>
                    <RateArrow><DownArrow color="#4a90f5" /></RateArrow>
                    送达率
                    <RateValue>62.50%</RateValue>
                  </Rate>
                  <Rate $x={40} $y={312}>
                    <RateArrow><DownArrow color="#6cc4f2" /></RateArrow>
                    点击率
                    <RateValue>0.00%</RateValue>
                  </Rate>
                </Chart>
                <Table>
                  <FixedCol>
                    <FixedCell $head>平台</FixedCell>
                    <FixedCell><Swatch $c="#567dda" />Android</FixedCell>
                    <FixedCell><Swatch $c="#75d0b4" />iOS</FixedCell>
                    <FixedCell $last><Swatch $c="#5a5a9c" />Quick APP</FixedCell>
                  </FixedCol>
                  <ScrollCol>
                    <GridRow $head>
                      {tableHead.map((h, i) => (
                        <Cell key={h} $align={aligns[i]}>{h}</Cell>
                      ))}
                    </GridRow>
                    {tableRows.map((r, ri) => (
                      <GridRow key={ri} $last={ri === 2}>
                        {r.map((v, i) => (
                          <Cell key={i} $align={aligns[i]}>{v}</Cell>
                        ))}
                      </GridRow>
                    ))}
                    <ScrollTrack>
                      <ScrollThumb $w={1208} />
                    </ScrollTrack>
                  </ScrollCol>
                </Table>
              </DataRow>
            </Card>
          </Content>
        </Main>
      </Body>
      <PageScrollTrack>
        <PageScrollThumb />
      </PageScrollTrack>
      <FloatPanel>
        <FloatIcon><WechatIcon /></FloatIcon>
        <FloatIcon><HeadsetIcon /></FloatIcon>
        <FloatIcon><PenIcon /></FloatIcon>
      </FloatPanel>
      <BottomShade />
    </Page>
  );
}
